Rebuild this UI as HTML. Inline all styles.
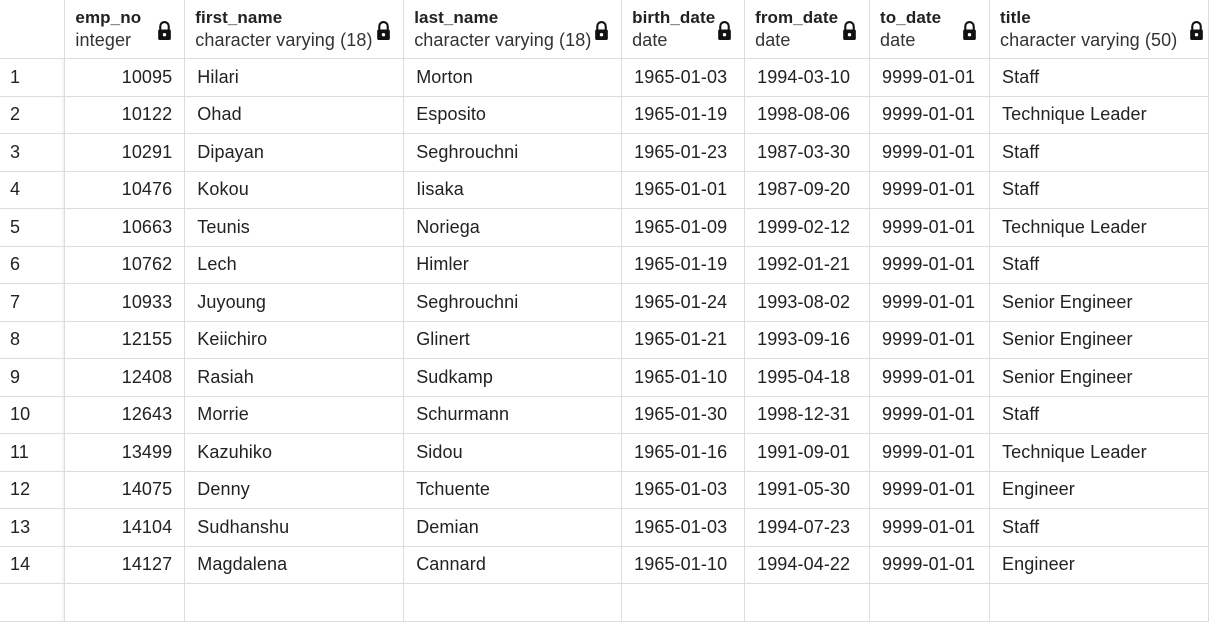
<!DOCTYPE html>
<html><head><style>
body{margin:0;background:#fff;font-family:"Liberation Sans",Arial,sans-serif;color:#222;width:1209px;height:587px;overflow:hidden}
table{border-collapse:collapse;table-layout:fixed;position:absolute;left:0;top:0}
td,th{border:1px solid #dcdde3;padding:0 12px;font-size:18px;letter-spacing:0.1px;white-space:nowrap;overflow:hidden;position:relative}
th{height:58px;text-align:left;font-weight:normal;border-top:none;vertical-align:top;padding-left:10px}
th b{display:block;font-weight:bold;font-size:17px;margin-top:8px;color:#222}
th span{display:block;font-size:18px;color:#333;margin-top:2px}
th svg{position:absolute;right:12px;top:21px}
td{height:36.5px;color:#222}
td.n{text-align:left;padding-left:10px;border-left:none}
td.r{text-align:right}
tr td:first-child,tr th:first-child{border-left:none}
td:first-child{box-shadow:inset -3px 0 3px -2px rgba(0,0,0,.08)}
</style></head><body>
<table>
<colgroup><col style="width:65px"><col style="width:120px"><col style="width:219px"><col style="width:218px"><col style="width:123px"><col style="width:125px"><col style="width:120px"><col style="width:219px"></colgroup>
<tr><th></th>
<th><b>emp_no</b><span>integer</span><svg width="15" height="19" viewBox="0 0 14 18"><path d="M3 8V5a4 4 0 0 1 8 0v3" fill="none" stroke="#111" stroke-width="2"/><rect x="1" y="8" width="12" height="10" rx="1.5" fill="#111"/><circle cx="7" cy="13" r="1.6" fill="#fff"/></svg></th>
<th><b>first_name</b><span>character varying (18)</span><svg width="15" height="19" viewBox="0 0 14 18"><path d="M3 8V5a4 4 0 0 1 8 0v3" fill="none" stroke="#111" stroke-width="2"/><rect x="1" y="8" width="12" height="10" rx="1.5" fill="#111"/><circle cx="7" cy="13" r="1.6" fill="#fff"/></svg></th>
<th><b>last_name</b><span>character varying (18)</span><svg width="15" height="19" viewBox="0 0 14 18"><path d="M3 8V5a4 4 0 0 1 8 0v3" fill="none" stroke="#111" stroke-width="2"/><rect x="1" y="8" width="12" height="10" rx="1.5" fill="#111"/><circle cx="7" cy="13" r="1.6" fill="#fff"/></svg></th>
<th><b>birth_date</b><span>date</span><svg width="15" height="19" viewBox="0 0 14 18"><path d="M3 8V5a4 4 0 0 1 8 0v3" fill="none" stroke="#111" stroke-width="2"/><rect x="1" y="8" width="12" height="10" rx="1.5" fill="#111"/><circle cx="7" cy="13" r="1.6" fill="#fff"/></svg></th>
<th><b>from_date</b><span>date</span><svg width="15" height="19" viewBox="0 0 14 18"><path d="M3 8V5a4 4 0 0 1 8 0v3" fill="none" stroke="#111" stroke-width="2"/><rect x="1" y="8" width="12" height="10" rx="1.5" fill="#111"/><circle cx="7" cy="13" r="1.6" fill="#fff"/></svg></th>
<th><b>to_date</b><span>date</span><svg width="15" height="19" viewBox="0 0 14 18"><path d="M3 8V5a4 4 0 0 1 8 0v3" fill="none" stroke="#111" stroke-width="2"/><rect x="1" y="8" width="12" height="10" rx="1.5" fill="#111"/><circle cx="7" cy="13" r="1.6" fill="#fff"/></svg></th>
<th><b>title</b><span>character varying (50)</span><svg width="15" height="19" viewBox="0 0 14 18" style="right:4px"><path d="M3 8V5a4 4 0 0 1 8 0v3" fill="none" stroke="#111" stroke-width="2"/><rect x="1" y="8" width="12" height="10" rx="1.5" fill="#111"/><circle cx="7" cy="13" r="1.6" fill="#fff"/></svg></th></tr>
<tr><td class="n">1</td><td class="r">10095</td><td>Hilari</td><td>Morton</td><td>1965-01-03</td><td>1994-03-10</td><td>9999-01-01</td><td>Staff</td></tr>
<tr><td class="n">2</td><td class="r">10122</td><td>Ohad</td><td>Esposito</td><td>1965-01-19</td><td>1998-08-06</td><td>9999-01-01</td><td>Technique Leader</td></tr>
<tr><td class="n">3</td><td class="r">10291</td><td>Dipayan</td><td>Seghrouchni</td><td>1965-01-23</td><td>1987-03-30</td><td>9999-01-01</td><td>Staff</td></tr>
<tr><td class="n">4</td><td class="r">10476</td><td>Kokou</td><td>Iisaka</td><td>1965-01-01</td><td>1987-09-20</td><td>9999-01-01</td><td>Staff</td></tr>
<tr><td class="n">5</td><td class="r">10663</td><td>Teunis</td><td>Noriega</td><td>1965-01-09</td><td>1999-02-12</td><td>9999-01-01</td><td>Technique Leader</td></tr>
<tr><td class="n">6</td><td class="r">10762</td><td>Lech</td><td>Himler</td><td>1965-01-19</td><td>1992-01-21</td><td>9999-01-01</td><td>Staff</td></tr>
<tr><td class="n">7</td><td class="r">10933</td><td>Juyoung</td><td>Seghrouchni</td><td>1965-01-24</td><td>1993-08-02</td><td>9999-01-01</td><td>Senior Engineer</td></tr>
<tr><td class="n">8</td><td class="r">12155</td><td>Keiichiro</td><td>Glinert</td><td>1965-01-21</td><td>1993-09-16</td><td>9999-01-01</td><td>Senior Engineer</td></tr>
<tr><td class="n">9</td><td class="r">12408</td><td>Rasiah</td><td>Sudkamp</td><td>1965-01-10</td><td>1995-04-18</td><td>9999-01-01</td><td>Senior Engineer</td></tr>
<tr><td class="n">10</td><td class="r">12643</td><td>Morrie</td><td>Schurmann</td><td>1965-01-30</td><td>1998-12-31</td><td>9999-01-01</td><td>Staff</td></tr>
<tr><td class="n">11</td><td class="r">13499</td><td>Kazuhiko</td><td>Sidou</td><td>1965-01-16</td><td>1991-09-01</td><td>9999-01-01</td><td>Technique Leader</td></tr>
<tr><td class="n">12</td><td class="r">14075</td><td>Denny</td><td>Tchuente</td><td>1965-01-03</td><td>1991-05-30</td><td>9999-01-01</td><td>Engineer</td></tr>
<tr><td class="n">13</td><td class="r">14104</td><td>Sudhanshu</td><td>Demian</td><td>1965-01-03</td><td>1994-07-23</td><td>9999-01-01</td><td>Staff</td></tr>
<tr><td class="n">14</td><td class="r">14127</td><td>Magdalena</td><td>Cannard</td><td>1965-01-10</td><td>1994-04-22</td><td>9999-01-01</td><td>Engineer</td></tr>
<tr><td class="n"></td><td></td><td></td><td></td><td></td><td></td><td></td><td></td></tr>
</table>
</body></html>
